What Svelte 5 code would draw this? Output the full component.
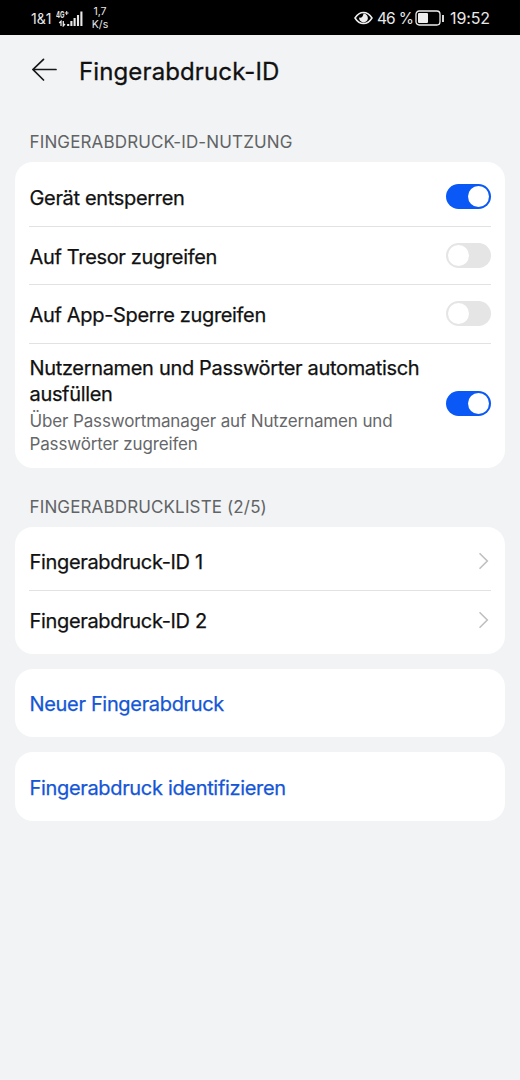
<script lang="ts">
	let usage = [
		{ title: 'Gerät entsperren', hint: '', on: true },
		{ title: 'Auf Tresor zugreifen', hint: '', on: false },
		{ title: 'Auf App-Sperre zugreifen', hint: '', on: false },
		{
			title: 'Nutzernamen und Passwörter automatisch ausfüllen',
			hint: 'Über Passwortmanager auf Nutzernamen und Passwörter zugreifen',
			on: true
		}
	]

	const fingerprints = ['Fingerabdruck-ID 1', 'Fingerabdruck-ID 2']
	const actions = ['Neuer Fingerabdruck', 'Fingerabdruck identifizieren']
</script>

<div class="screen">
	<div class="status-bar">
		<span class="carrier">1&amp;1</span>
		<svg class="signal" width="28" height="17" viewBox="0 0 28 17">
			<text x="0" y="7.5" textLength="8.5" lengthAdjust="spacingAndGlyphs">4G</text>
			<path d="M10.7 1v4M8.9 3h3.6" stroke="#e8e8e8" stroke-width="1" />
			<path d="M5 16v-4.8L3.2 13M7.3 11v4.8L9 14" fill="none" stroke="#e8e8e8" stroke-width="1.3" />
			<path d="M12.2 16v-2M15.4 16v-5M18.6 16V8M22 16V5M25.4 16V1.5" stroke="#e8e8e8" stroke-width="2.1" />
		</svg>
		<div class="speed"><span>1,7</span><span>K/s</span></div>
		<svg class="eye" width="19" height="14" viewBox="0 0 19 14">
			<path d="M1 7Q4.5 1.4 9.5 1.4T18 7Q14.5 12.6 9.5 12.6T1 7Z" fill="none" stroke="#eee" stroke-width="1.5" />
			<path d="M9.5 2.6A4.4 4.4 0 1 1 5.1 6.6Q7.3 7 8.3 5.8T9.5 2.6Z" fill="#eee" />
		</svg>
		<span class="percent">46 %</span>
		<svg class="battery" width="30" height="16" viewBox="0 0 30 16">
			<rect x="1" y="1" width="24" height="14" rx="3.2" fill="none" stroke="#eee" stroke-width="1.3" />
			<rect x="3" y="3" width="10" height="10" rx="1" fill="#eee" />
			<path d="M28 5v7" stroke="#eee" stroke-width="1.8" />
		</svg>
		<span class="clock">19:52</span>
	</div>

	<header>
		<svg width="26" height="24" viewBox="0 0 26 24">
			<path d="M24 11.5H1M11.5 1.3L1 11.5L11.5 22" fill="none" stroke="#17181a" stroke-width="1.7" stroke-linecap="round" />
		</svg>
		<h1>Fingerabdruck-ID</h1>
	</header>

	<h2 class="first">FINGERABDRUCK-ID-NUTZUNG</h2>
	<div class="card">
		{#each usage as item}
			<div class="row" class:tall={item.hint}>
				<div class="label">
					<p class="title">{item.title}</p>
					{#if item.hint}
						<p class="hint">{item.hint}</p>
					{/if}
				</div>
				<button
					class="toggle"
					class:on={item.on}
					aria-label={item.title}
					onclick={() => (item.on = !item.on)}
				></button>
			</div>
		{/each}
	</div>

	<h2 class="second">FINGERABDRUCKLISTE (2/5)</h2>
	<div class="card">
		{#each fingerprints as name}
			<div class="row">
				<p class="title">{name}</p>
				<svg class="chevron" width="12" height="18" viewBox="0 0 12 18">
					<path d="M2 1.7L9.3 9L2 16.3" fill="none" stroke="#bfbfc0" stroke-width="1.6" stroke-linecap="round" />
				</svg>
			</div>
		{/each}
	</div>

	{#each actions as action}
		<div class="card action">
			<div class="row"><p class="title">{action}</p></div>
		</div>
	{/each}
</div>

<style>
	:global(body) {
		margin: 0;
		background: #f1f3f5;
	}

	.screen {
		height: 1080px;
		overflow: hidden;
		background: #f1f3f5;
		color: #111;
		font-family: Inter, Roboto, sans-serif;
	}

	p,
	h1,
	h2 {
		margin: 0;
	}

	.status-bar {
		display: flex;
		align-items: center;
		box-sizing: border-box;
		height: 35px;
		padding: 1px 30px 0 31px;
		background: #000;
		color: #e8e8e8;
		white-space: nowrap;
	}

	.carrier {
		width: 25px;
		font-size: 14px;
	}

	.signal text {
		fill: #e8e8e8;
		font-size: 9px;
		font-weight: 700;
	}

	.speed {
		display: flex;
		flex-direction: column;
		align-items: center;
		width: 18px;
		margin-left: 7px;
		font-size: 10.5px;
		line-height: 13px;
	}

	.eye {
		margin-left: auto;
	}

	.percent {
		width: 38px;
		margin-left: 4px;
		font-size: 15.5px;
		letter-spacing: -0.9px;
		word-spacing: 0.5px;
	}

	.clock {
		width: 40px;
		margin-left: 5px;
		font-size: 16px;
		letter-spacing: -0.1px;
	}

	header {
		display: flex;
		align-items: center;
		gap: 21px;
		height: 70px;
		padding-left: 32px;
	}

	h1 {
		padding-top: 2px;
		font-size: 24px;
		font-weight: 400;
		letter-spacing: 0.12px;
		-webkit-text-stroke: 0.3px;
	}

	h2 {
		padding-left: 29.5px;
		color: #626365;
		font-size: 17px;
		font-weight: 400;
		line-height: 20px;
		letter-spacing: 0.14px;
	}

	.first {
		padding-top: 27px;
		padding-bottom: 10px;
	}

	.second {
		padding-top: 29px;
		padding-bottom: 10px;
	}

	.card {
		margin: 0 15px;
		padding: 5px 14px;
		border-radius: 18px;
		background: #fff;
	}

	.row {
		display: flex;
		align-items: center;
		justify-content: space-between;
		box-sizing: border-box;
		height: 58.5px;
	}

	.row + .row {
		border-top: 1px solid #e2e2e3;
	}

	.tall {
		height: 120px;
	}

	.title {
		padding-top: 3px;
		padding-left: 0.5px;
		font-size: 20px;
		line-height: 26px;
		letter-spacing: -0.33px;
		-webkit-text-stroke: 0.25px;
	}

	.tall .title {
		padding-top: 4px;
	}

	.hint {
		padding-top: 3px;
		padding-left: 0.5px;
		color: #66676a;
		font-size: 17px;
		line-height: 23px;
		letter-spacing: -0.14px;
	}

	.toggle {
		display: flex;
		flex: none;
		box-sizing: border-box;
		width: 45px;
		height: 25px;
		padding: 2px;
		border: none;
		border-radius: 13px;
		background: #e5e5e5;
	}

	.toggle::before {
		content: '';
		width: 21px;
		height: 21px;
		border-radius: 50%;
		background: #fff;
	}

	.toggle.on {
		justify-content: flex-end;
		background: #0a59f7;
	}

	.chevron {
		margin-right: 1px;
	}

	.action {
		margin-top: 15px;
		color: #1456d6;
	}
</style>
